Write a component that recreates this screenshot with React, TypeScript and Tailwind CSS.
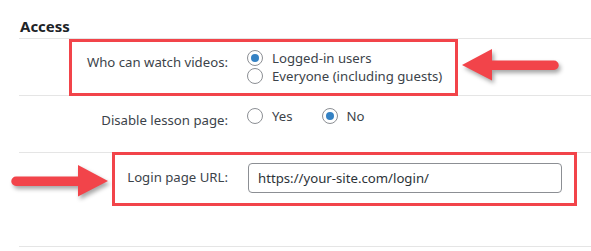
import React from 'react';

const Radio: React.FC<{ checked?: boolean; label: string }> = ({ checked, label }) => (
  <label className="flex items-center h-[18px]">
    <span className="w-4 h-4 rounded-full border border-[#8c8f94] bg-white flex items-center justify-center shrink-0">
      {checked && <span className="w-2 h-2 rounded-full bg-[#3582c4]" />}
    </span>
    <span className="ml-[9px]">{label}</span>
  </label>
);

const Arrow: React.FC<{ dir: 'left' | 'right'; className: string }> = ({ dir, className }) => (
  <svg
    className={className}
    width="110"
    height="40"
    viewBox="0 0 110 40"
    style={{ filter: 'drop-shadow(2px 3px 2px rgba(0,0,0,0.35))' }}
  >
    <g transform={dir === 'left' ? 'translate(110 0) scale(-1 1)' : undefined}>
      <path d="M8 15.5 H70 V4 L100 20 L70 35.5 V25 H8 A4.75 4.75 0 0 1 8 15.5 Z" fill="#f2444a" />
    </g>
  </svg>
);

export default function App() {
  return (
    <div className="relative w-[591px] h-[251px] bg-white overflow-hidden font-['Noto_Sans',sans-serif] text-[13.2px] leading-[18px] text-[#3c434a]">
      <div className="pl-[19px]">
        <h2 className="h-[38px] pl-px pt-[17px] text-[15px] leading-[18px] font-bold text-[#1d2327]">Access</h2>

        <div className="flex h-[57px] border-t border-[#e5e5e5]">
          <div className="w-[209px] text-right pt-[14px]">Who can watch videos:</div>
          <div className="ml-[19px] pt-[10px] flex flex-col">
            <Radio checked label="Logged-in users" />
            <Radio label="Everyone (including guests)" />
          </div>
        </div>

        <div className="flex h-[57px] border-t border-[#e5e5e5]">
          <div className="w-[209px] text-right pt-[15px]">Disable lesson page:</div>
          <div className="ml-[19px] pt-[11px] flex gap-[29px]">
            <Radio label="Yes" />
            <Radio checked label="No" />
          </div>
        </div>

        <div className="flex h-[95px] border-t border-b border-[#e5e5e5]">
          <div className="w-[209px] text-right pt-[15px]">Login page URL:</div>
          <div className="ml-[20px] pt-[10px]">
            <input
              readOnly
              value="https://your-site.com/login/"
              className="w-[314px] h-[30px] px-[9px] rounded-[4px] border border-[#8c8f94] text-[#2c3338] outline-none"
            />
          </div>
        </div>
      </div>

      <div className="absolute left-[69px] top-[39px] w-[389px] h-[57px] border-[3px] border-[#f2444a]" />
      <div className="absolute left-[112px] top-[152px] w-[465px] h-[54px] border-[3px] border-[#f2444a]" />

      <Arrow dir="left" className="absolute left-[452px] top-[45px]" />
      <Arrow dir="right" className="absolute left-[8px] top-[161px]" />
    </div>
  );
}
